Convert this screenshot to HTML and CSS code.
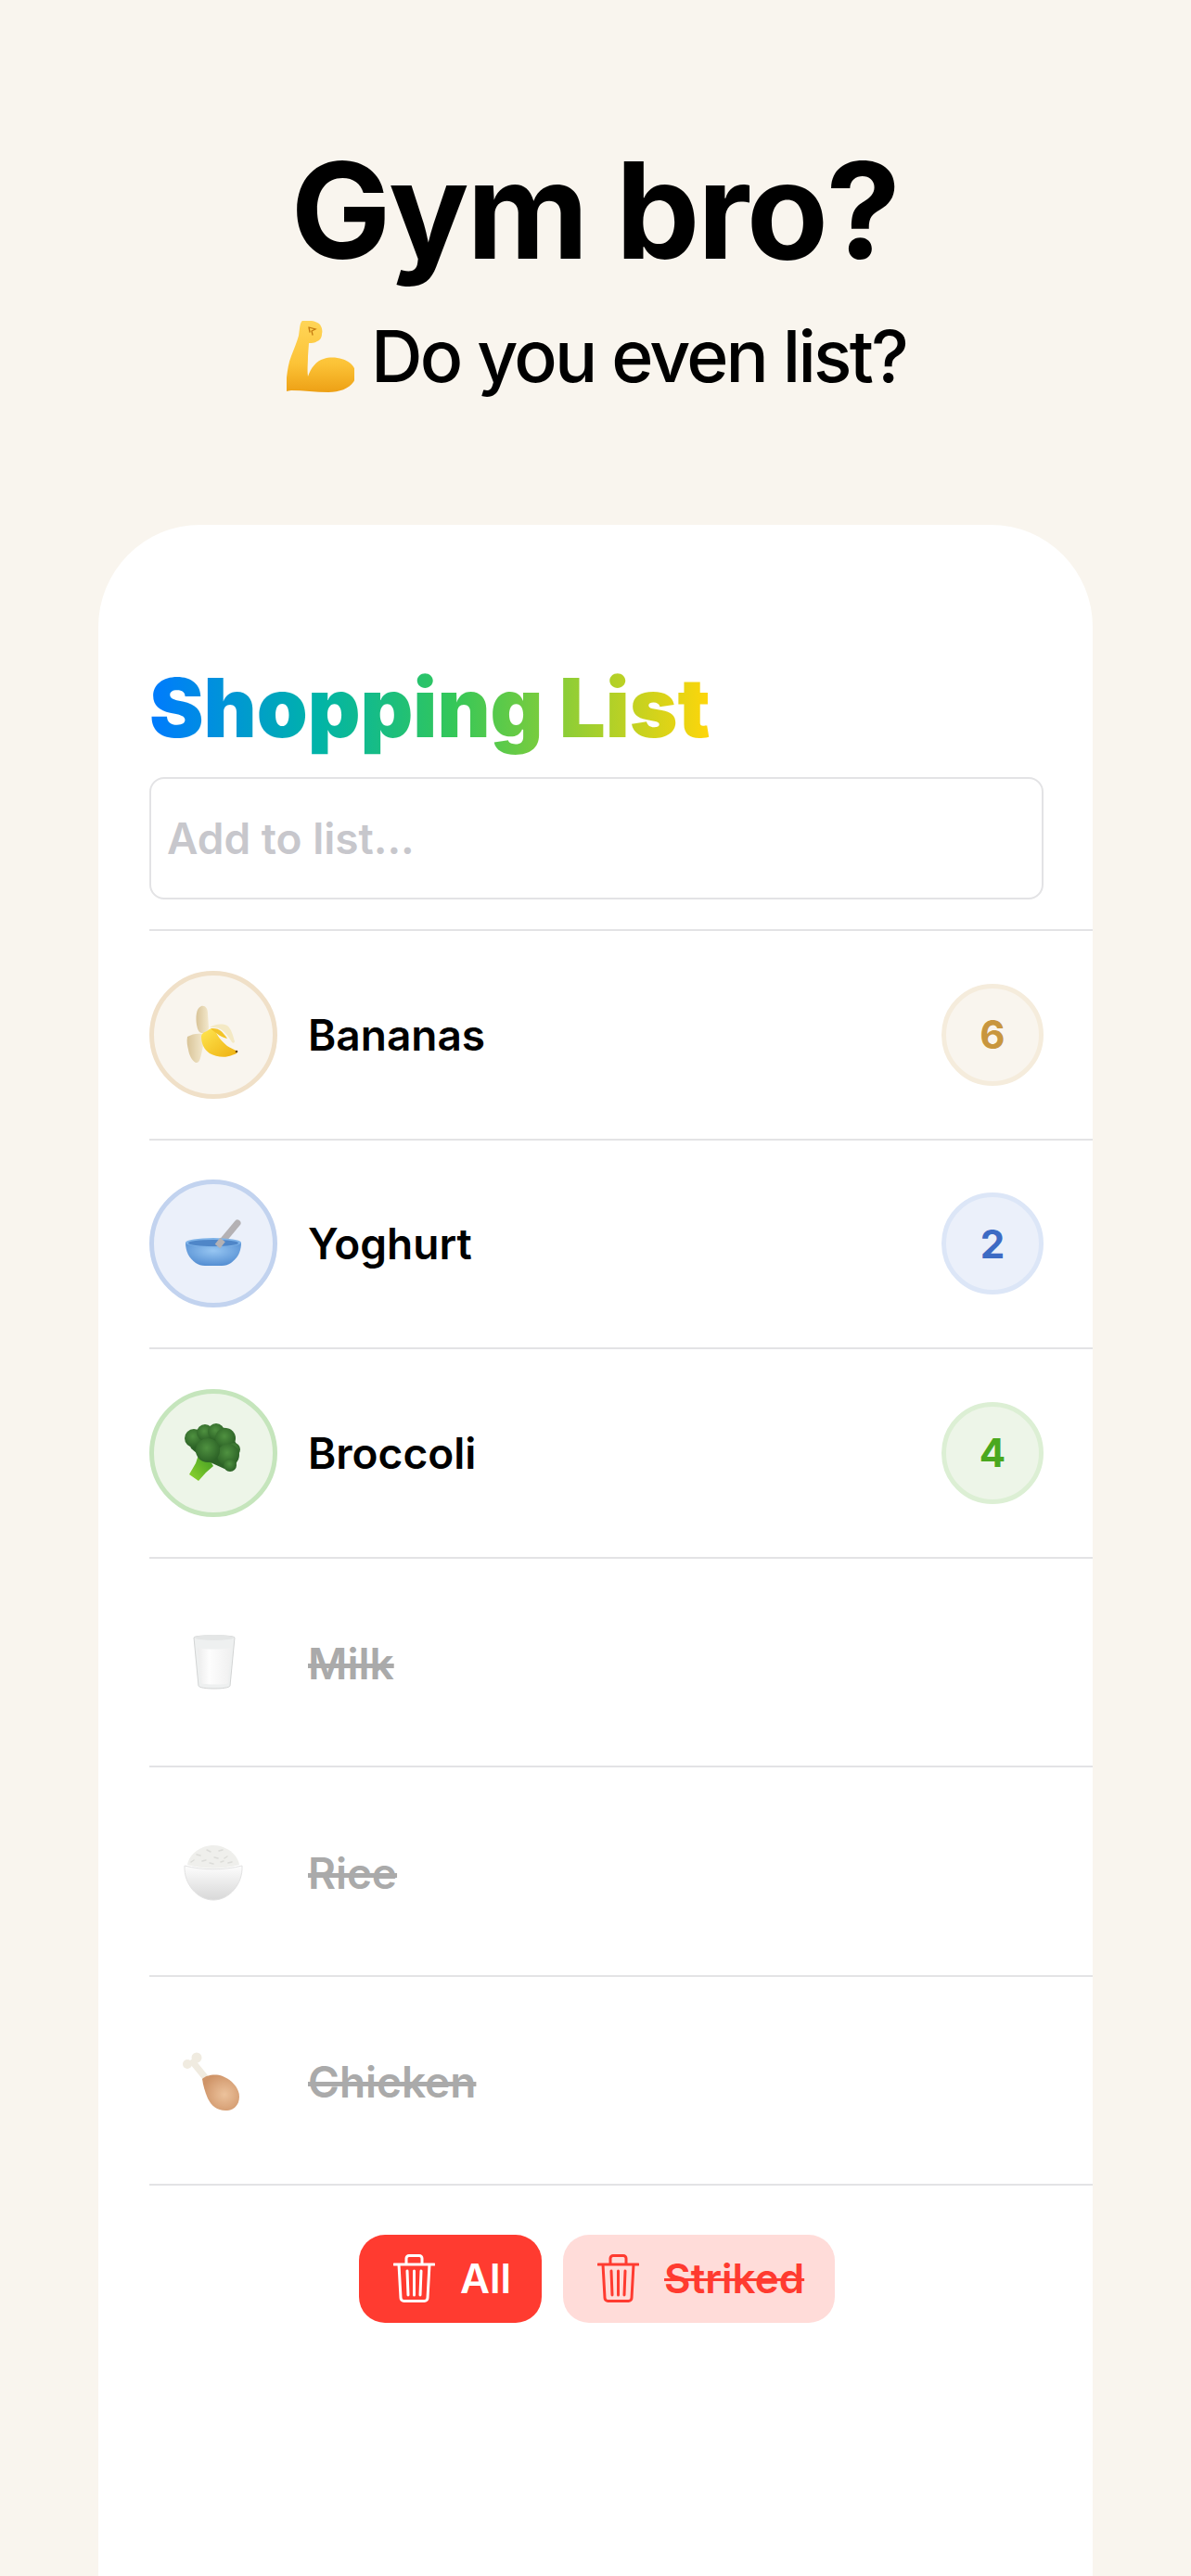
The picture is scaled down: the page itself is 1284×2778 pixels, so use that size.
FILE: index.html
```html
<!DOCTYPE html>
<html lang="en">
<head>
  <meta charset="UTF-8">
  <title>Shopping List</title>
  <link rel="stylesheet" href="styles.css">
</head>
<body>

  <!-- shared gradients for the food pictures -->
  <svg class="defs" width="0" height="0">
    <defs>
      <linearGradient id="armFill" x1="0" y1="0" x2="0" y2="1">
        <stop offset="0" stop-color="#ffd558"/>
        <stop offset="0.6" stop-color="#fcc337"/>
        <stop offset="1" stop-color="#eda015"/>
      </linearGradient>
      <linearGradient id="bananaFill" x1="0" y1="0" x2="1" y2="1">
        <stop offset="0" stop-color="#ffe650"/>
        <stop offset="1" stop-color="#eeb010"/>
      </linearGradient>
      <linearGradient id="peelFill" x1="0" y1="0" x2="1" y2="0">
        <stop offset="0" stop-color="#d9c498"/>
        <stop offset="1" stop-color="#f3e8cc"/>
      </linearGradient>
      <radialGradient id="bowlFill" cx="0.5" cy="0.35" r="0.7">
        <stop offset="0" stop-color="#97c6f2"/>
        <stop offset="1" stop-color="#4f8ad0"/>
      </radialGradient>
      <radialGradient id="floretFill" cx="0.45" cy="0.4" r="0.6">
        <stop offset="0" stop-color="#4f9140"/>
        <stop offset="1" stop-color="#2c6226"/>
      </radialGradient>
      <linearGradient id="stemFill" x1="0" y1="1" x2="1" y2="0">
        <stop offset="0" stop-color="#8fd62f"/>
        <stop offset="1" stop-color="#3f9a22"/>
      </linearGradient>
      <linearGradient id="milkFill" x1="0" y1="0" x2="1" y2="0">
        <stop offset="0" stop-color="#ececec"/>
        <stop offset="0.35" stop-color="#fdfdfd"/>
        <stop offset="1" stop-color="#f0f0f0"/>
      </linearGradient>
      <linearGradient id="riceBowl" x1="0" y1="0" x2="0" y2="1">
        <stop offset="0" stop-color="#fdfdfd"/>
        <stop offset="1" stop-color="#d8d8d8"/>
      </linearGradient>
      <radialGradient id="meatFill" cx="0.6" cy="0.55" r="0.6">
        <stop offset="0" stop-color="#ecc29c"/>
        <stop offset="1" stop-color="#cf9468"/>
      </radialGradient>
    </defs>
  </svg>

  <header class="hero">
    <h1 class="hero-title">Gym bro?</h1>
    <p class="hero-sub">
      <svg class="arm" viewBox="9 7 73 77">
        <path fill="url(#armFill)" d="M27 7c6-1 14 0 18 4 2 3 3 7 2 10 0 4-2 7-5 8-3 2-6 2-9 2l-1 14c0 8-1 15 0 22 3-9 9-17 17-19 9-3 22-1 29 5 6 5 7 14 3 20-5 7-15 11-27 11-14 0-27-2-40-2-3 0-6 2-6 0l1-14c1-8 2-16 5-23 3-8 6-15 8-22 1-6 1-12 3-15 1-2 2-1 5-1z"/>
        <path fill="none" stroke="#c47a10" stroke-width="1.300" stroke-linecap="round" d="M33 14l7 2-4 2 1 4m-4-8l1 5"/>
      </svg>
      <span>Do you even list?</span>
    </p>
  </header>

  <main class="card">
    <h2 class="card-title">Shopping List</h2>
    <div class="add-box">Add to list...</div>

    <ul class="items">
      <li class="item">
        <span class="pic pic-tan">
          <svg class="food" viewBox="0 0 80 80">
            <path fill="url(#peelFill)" d="M27 9c4-1 7 2 7 8l1 15c0 4-4 7-8 6-3-1-4-4-5-9-1-7-1-18 5-20z"/>
            <path fill="url(#peelFill)" d="M12 42c5-3 11-4 17-3 1 6 0 15-2 22-1 4-2 10-6 9-4-2-7-8-8-14-1-4-2-9-1-14z"/>
            <path fill="url(#bananaFill)" d="M33 36c3-3 7-4 9-1 2 6 7 12 13 17 3 2 8 4 11 6 0 2-3 3-6 4-7 3-17 2-24-2-6-4-9-11-9-18 0-3 3-5 6-6z"/>
            <path fill="#f4e9c4" d="M36 32c5-3 12-5 19-2 4 3 6 10 8 17 0 2-2 2-3 1-3-5-7-11-12-14-4-2-8-2-12-2z"/>
            <path fill="#f3c428" d="M37 33c3 0 7 0 10 2 3 2 6 6 8 9-5-1-12-5-18-11z"/>
            <circle cx="65" cy="58" r="1.300" fill="#6b4a12"/>
          </svg>
        </span>
        <span class="name">Bananas</span>
        <span class="count count-tan">6</span>
      </li>
      <li class="item">
        <span class="pic pic-blue">
          <svg class="food" viewBox="0 0 80 80">
            <path fill="none" stroke="#b4b1b4" stroke-width="7" stroke-linecap="round" d="M46 42L66 18"/>
            <path fill="url(#bowlFill)" d="M10 39c0 10 4 17 11 22 3 2 6 3 10 3h18c4 0 7-1 10-3 7-5 11-12 11-22z"/>
            <ellipse cx="40" cy="39" rx="30" ry="5" fill="#7fb3e8"/>
            <ellipse cx="40" cy="39.500" rx="27" ry="3.600" fill="#4f86c8"/>
            <path fill="none" stroke="#b4b1b4" stroke-width="7" d="M44.500 43L50 36"/>
          </svg>
        </span>
        <span class="name">Yoghurt</span>
        <span class="count count-blue">2</span>
      </li>
      <li class="item">
        <span class="pic pic-green">
          <svg class="food" viewBox="0 0 80 80">
            <path fill="url(#stemFill)" d="M24 42l-3 9-7 12 10 7 8-9 8-7-6-10z"/>
            <path fill="#2c6226" d="M12 24l18-13 24 2 14 22-4 20-12 2-22-10-14-12z"/>
            <circle cx="19" cy="24" r="10" fill="url(#floretFill)"/>
            <circle cx="31" cy="18" r="9" fill="url(#floretFill)"/>
            <circle cx="43" cy="17" r="9" fill="url(#floretFill)"/>
            <circle cx="53" cy="24" r="11" fill="url(#floretFill)"/>
            <circle cx="62" cy="36" r="7" fill="url(#floretFill)"/>
            <circle cx="56" cy="42" r="12" fill="url(#floretFill)"/>
            <circle cx="58" cy="53" r="7" fill="url(#floretFill)"/>
            <circle cx="34" cy="37" r="13" fill="url(#floretFill)"/>
          </svg>
        </span>
        <span class="name">Broccoli</span>
        <span class="count count-green">4</span>
      </li>
      <li class="item done">
        <span class="pic">
          <svg class="food" viewBox="0 0 80 80">
            <path fill="#eef0f0" stroke="#d2d4d4" stroke-width="1" d="M19 13c0-3 44-3 44 0l-5 52c-1 4-33 4-34 0z"/>
            <path fill="url(#milkFill)" d="M23 24c10 2 26 2 36 0l-3 38c-1 2-28 2-29 0z"/>
            <ellipse cx="41" cy="13" rx="21" ry="3" fill="#e4e6e6"/>
          </svg>
        </span>
        <span class="name">Milk</span>
      </li>
      <li class="item done">
        <span class="pic">
          <svg class="food" viewBox="0 0 80 80">
            <path fill="#efefec" d="M12 33c2-12 15-21 28-21s26 9 28 21c-18 5-38 5-56 0z"/>
            <path fill="none" stroke="#dcdcd8" stroke-width="1.500" stroke-linecap="round" d="M22 22l4 1M33 17l4 2M46 18l4-1M55 24l-3 2M28 29l4-1M41 25l4 1M16 30l3-2M60 30l-4 1M36 31l4 1M48 30l3-1"/>
            <path fill="url(#riceBowl)" stroke="#e2e2e2" stroke-width="1" d="M9 34c20 5 42 5 62 0 1 20-14 37-31 37S8 54 9 34z"/>
          </svg>
        </span>
        <span class="name">Rice</span>
      </li>
      <li class="item done">
        <span class="pic">
          <svg class="food" viewBox="0 -3 80 80">
            <path fill="none" stroke="#f0ebe0" stroke-width="7" stroke-linecap="round" d="M18 18l13 16"/>
            <circle cx="12" cy="20" r="5" fill="#f0ebe0"/>
            <circle cx="22" cy="13" r="5.500" fill="#f0ebe0"/>
            <path fill="url(#meatFill)" d="M28 36c4-4 14-6 22-3 10 4 18 13 18 22 0 10-7 15-15 15-9 0-15-5-19-13-3-7-5-14-6-21z"/>
          </svg>
        </span>
        <span class="name">Chicken</span>
      </li>
    </ul>

    <div class="actions">
      <button class="btn btn-all">
        <svg class="trash" viewBox="0 0 45 52"><path d="M1 11h43M14 11V4.500a3 3 0 0 1 3-3h11a3 3 0 0 1 3 3V11M6 11l2 36a3.500 3.500 0 0 0 3.500 3.500h22A3.500 3.500 0 0 0 37 47l2-36M15 18l1 26M22.500 18v26M30 18l-1 26"/></svg>
        <span>All</span>
      </button>
      <button class="btn btn-striked">
        <svg class="trash" viewBox="0 0 45 52"><path d="M1 11h43M14 11V4.500a3 3 0 0 1 3-3h11a3 3 0 0 1 3 3V11M6 11l2 36a3.500 3.500 0 0 0 3.500 3.500h22A3.500 3.500 0 0 0 37 47l2-36M15 18l1 26M22.500 18v26M30 18l-1 26"/></svg>
        <span class="struck">Striked</span>
      </button>
    </div>
  </main>

</body>
</html>
```

FILE: styles.css
```css
html, body {
  margin: 0;
  height: 2778px;
  overflow: hidden;
}

body {
  background: #f9f5ee;
  font-family: Inter, "Liberation Sans", sans-serif;
  color: #000;
}

.defs {
  display: block;
  height: 0;
}

/* Header */
.hero {
  height: 566px;
  padding-top: 147px;
  box-sizing: border-box;
  text-align: center;
}

.hero-title {
  margin: 0;
  padding-right: 2px;
  font-size: 144px;
  line-height: 160px;
  font-weight: 700;
  letter-spacing: -2.5px;
}

.hero-sub {
  margin: 30px 0 0;
  padding-left: 2px;
  display: flex;
  justify-content: center;
  align-items: center;
  gap: 18px;
  font-size: 77px;
  line-height: 94px;
  font-weight: 450;
  letter-spacing: -2.8px;
}

.arm {
  width: 73px;
  height: 77px;
}

/* Card */
.card {
  margin-left: 106px;
  width: 1072px;
  height: 2212px;
  box-sizing: border-box;
  padding: 145px 0 0 55px;
  background: #fff;
  border-radius: 110px 110px 0 0;
}

.card-title {
  display: inline-block;
  margin: 0;
  font-size: 88px;
  line-height: 104px;
  font-weight: 900;
  background: linear-gradient(90deg, #007aff 0%, #00b4a8 30%, #34c759 54%, #ffd60a 100%);
  -webkit-background-clip: text;
  background-clip: text;
  color: transparent;
}

.add-box {
  margin-top: 23px;
  width: 964px;
  height: 132px;
  box-sizing: border-box;
  padding-left: 17px;
  display: flex;
  align-items: center;
  border: 2px solid #e3e3e5;
  border-radius: 16px;
  font-size: 46px;
  font-weight: 600;
  color: #c7c7cc;
}

/* List */
.items {
  list-style: none;
  margin: 32px 0 0;
  padding: 0;
}

.item {
  height: 225.6px;
  box-sizing: border-box;
  padding-right: 53px;
  display: flex;
  align-items: center;
  border-top: 2px solid #e3e3e5;
}

.item:last-child {
  border-bottom: 2px solid #e3e3e5;
  height: 227px;
}

.pic {
  width: 138px;
  height: 138px;
  box-sizing: border-box;
  display: flex;
  align-items: center;
  justify-content: center;
  border-radius: 50%;
  border: 5px solid transparent;
}

.food {
  width: 80px;
  height: 80px;
  flex: none;
}

.pic-tan { background: #f9f5ee; border-color: #f0e0c8; }
.pic-blue { background: #ebf0fa; border-color: #c2d3ef; }
.pic-green { background: #edf5e8; border-color: #c5e5bc; }

.name {
  margin-left: 33px;
  flex: 1;
  font-size: 46px;
  font-weight: 600;
}

.count {
  width: 110px;
  height: 110px;
  box-sizing: border-box;
  display: flex;
  align-items: center;
  justify-content: center;
  border-radius: 50%;
  border: 5px solid transparent;
  font-size: 42px;
  font-weight: 700;
}

.count-tan { background: #f9f5ee; border-color: #f5ecdc; color: #c8963e; }
.count-blue { background: #ebf0fa; border-color: #dce6f7; color: #3d6bc4; }
.count-green { background: #edf5e8; border-color: #dcefd4; color: #4aa81f; }

.done .name {
  padding-top: 3px;
  color: #aaa;
  text-decoration: line-through;
  text-decoration-thickness: 5px;
}

/* Buttons */
.actions {
  margin-top: 53px;
  padding-left: 226px;
  display: flex;
  gap: 23px;
}

.btn {
  height: 95px;
  padding: 0 33px 0 37px;
  display: flex;
  align-items: center;
  gap: 27px;
  border: none;
  border-radius: 28px;
  font-family: inherit;
  font-size: 44px;
  font-weight: 600;
}

.btn-all { background: #ff3b30; color: #fff; }
.btn-striked { background: #ffdcd9; color: #ff3b30; }

.struck {
  text-decoration: line-through;
  text-decoration-thickness: 3px;
}

.trash {
  width: 45px;
  height: 52px;
  fill: none;
  stroke: currentColor;
  stroke-width: 3;
  stroke-linecap: round;
  stroke-linejoin: round;
}
```
